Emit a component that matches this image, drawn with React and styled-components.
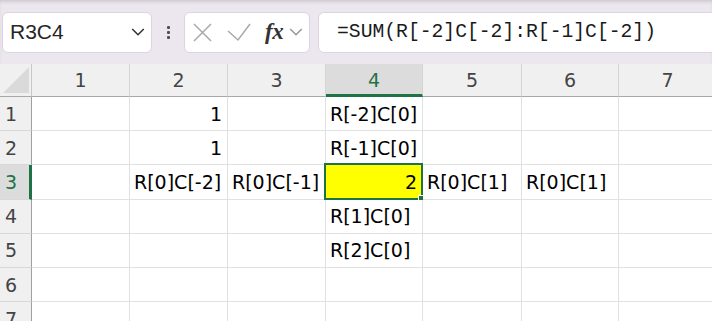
import React from 'react';
import styled, { createGlobalStyle } from 'styled-components';

const GlobalStyle = createGlobalStyle`
	html, body {
		margin: 0;
		padding: 0;
		background: #ffffff;
		overflow: hidden;
	}
	* {
		box-sizing: border-box;
	}
`;

const GREEN = '#1f7246';
const COLS = [1, 2, 3, 4, 5, 6, 7];
const ACTIVE_COL = 4;
const ACTIVE_ROW = 3;

// cell contents keyed by row, then column
const cells = {
	1: { 2: { v: '1', num: true }, 4: { v: 'R[-2]C[0]' } },
	2: { 2: { v: '1', num: true }, 4: { v: 'R[-1]C[0]' } },
	3: {
		2: { v: 'R[0]C[-2]' },
		3: { v: 'R[0]C[-1]' },
		4: { v: '2', num: true },
		5: { v: 'R[0]C[1]' },
		6: { v: 'R[0]C[1]' },
	},
	4: { 4: { v: 'R[1]C[0]' } },
	5: { 4: { v: 'R[2]C[0]' } },
	6: {},
	7: {},
};

const Toolbar = styled.div`
	height: 64px;
	background: #ece6ee;
	display: flex;
	align-items: center;
	padding-left: 2px;
	box-shadow: inset 0 3px 4px -2px rgba(0, 0, 0, 0.18);
`;

const Box = styled.div`
	height: 41px;
	background: #ffffff;
	border: 1px solid #dcd4df;
	border-radius: 6px;
	display: flex;
	align-items: center;
`;

const NameBox = styled(Box)`
	width: 150px;
	padding: 0 6px 0 7px;
	justify-content: space-between;
	font-family: 'Liberation Sans', Arial, sans-serif;
	font-size: 21px;
	color: #262626;
`;

const Kebab = styled.div`
	width: 32px;
	display: flex;
	flex-direction: column;
	align-items: center;
	gap: 2px;

	span {
		width: 3px;
		height: 3px;
		border-radius: 1px;
		background: #505050;
	}
`;

const FuncBox = styled(Box)`
	width: 126px;
	padding: 0 3px 0 8px;
	gap: 0;
`;

const Fx = styled.span`
	font-family: 'Liberation Serif', 'Times New Roman', serif;
	font-style: italic;
	font-weight: bold;
	font-size: 23px;
	color: #333;
	margin: 0 6px 0 14px;
	letter-spacing: -0.5px;
`;

const FormulaBox = styled(Box)`
	flex: 1;
	margin-left: 8px;
	margin-right: -10px;
	padding-left: 18px;
	font-family: 'Liberation Mono', 'DejaVu Sans Mono', monospace;
	font-size: 19.7px;
	color: #1a1a1a;
`;

const Sheet = styled.div`
	display: grid;
	grid-template-columns: 32px 98px 98px 98px 97px 99px 97px 98px;
	grid-template-rows: 33px repeat(7, 34.2px);
	font-family: 'DejaVu Sans', sans-serif;
	font-size: 19px;
`;

const Corner = styled.div`
	background: #f0f0f0;
	border-right: 1px solid #c8c8c8;
	border-bottom: 1px solid #a8a8a8;
	position: relative;

	svg {
		position: absolute;
		left: 3px;
		bottom: 3px;
	}
`;

const ColHead = styled.div`
	background: ${p => (p.$active ? '#dcdcdc' : '#f0f0f0')};
	color: ${p => (p.$active ? GREEN : '#444')};
	border-right: 1px solid #d4d4d4;
	border-bottom: ${p => (p.$active ? `3px solid ${GREEN}` : '1px solid #a8a8a8')};
	display: flex;
	align-items: center;
	justify-content: center;
	padding-top: ${p => (p.$active ? '2px' : '0')};
`;

const RowHead = styled.div`
	background: ${p => (p.$active ? '#dcdcdc' : '#f0f0f0')};
	color: ${p => (p.$active ? GREEN : '#444')};
	border-right: ${p => (p.$active ? `3px solid ${GREEN}` : '1px solid #a0a0a0')};
	border-bottom: 1px solid #d8d8d8;
	display: flex;
	align-items: center;
	padding-left: 5px;
`;

const Cell = styled.div`
	position: relative;
	background: ${p => (p.$active ? '#ffff00' : '#ffffff')};
	border-right: 1px solid #e1e1e1;
	border-bottom: 1px solid #e1e1e1;
	display: flex;
	align-items: center;
	justify-content: ${p => (p.$num ? 'flex-end' : 'flex-start')};
	padding: 0 5px 0 4px;
	color: #000;
	white-space: nowrap;
`;

const Selection = styled.div`
	position: absolute;
	left: -2px;
	top: -2px;
	right: -1px;
	bottom: -1px;
	border: 2px solid ${GREEN};
	pointer-events: none;
`;

const Handle = styled.div`
	position: absolute;
	right: -5px;
	bottom: -5px;
	width: 8px;
	height: 8px;
	background: ${GREEN};
	border: 1px solid #ffffff;
`;

const Chevron = ({ size = 14, color = '#444' }) => (
	<svg width={size} height={size * 0.55} viewBox='0 0 14 8' fill='none'>
		<polyline points='1,1 7,7 13,1' stroke={color} strokeWidth='1.6' />
	</svg>
);

const App = () => {
	return (
		<>
			<GlobalStyle />
			<Toolbar>
				<NameBox>
					<span>R3C4</span>
					<Chevron size={14} color='#333' />
				</NameBox>
				<Kebab>
					<span />
					<span />
					<span />
				</Kebab>
				<FuncBox>
					<svg width='19' height='19' viewBox='0 0 19 19'>
						<path d='M1 1 L18 18 M18 1 L1 18' stroke='#a9a9a9' strokeWidth='1.5' />
					</svg>
					<svg width='24' height='19' viewBox='0 0 24 19' style={{ marginLeft: 15 }}>
						<path d='M1 8 L11 17 L23 1' stroke='#a9a9a9' strokeWidth='1.5' fill='none' />
					</svg>
					<Fx>fx</Fx>
					<Chevron size={14} color='#999' />
				</FuncBox>
				<FormulaBox>=SUM(R[-2]C[-2]:R[-1]C[-2])</FormulaBox>
			</Toolbar>
			<Sheet>
				<Corner>
					<svg width='26' height='26' viewBox='0 0 26 26'>
						<polygon points='0,26 26,26 26,0' fill='#dadada' />
					</svg>
				</Corner>
				{COLS.map(c => (
					<ColHead key={c} $active={c === ACTIVE_COL}>
						{c}
					</ColHead>
				))}
				{COLS.map(r => (
					<React.Fragment key={r}>
						<RowHead $active={r === ACTIVE_ROW}>{r}</RowHead>
						{COLS.map(c => {
							const cell = cells[r][c];
							const active = r === ACTIVE_ROW && c === ACTIVE_COL;
							return (
								<Cell key={c} $active={active} $num={cell && cell.num}>
									{cell ? cell.v : ''}
									{active && (
										<Selection>
											<Handle />
										</Selection>
									)}
								</Cell>
							);
						})}
					</React.Fragment>
				))}
			</Sheet>
		</>
	);
};

export default App;
